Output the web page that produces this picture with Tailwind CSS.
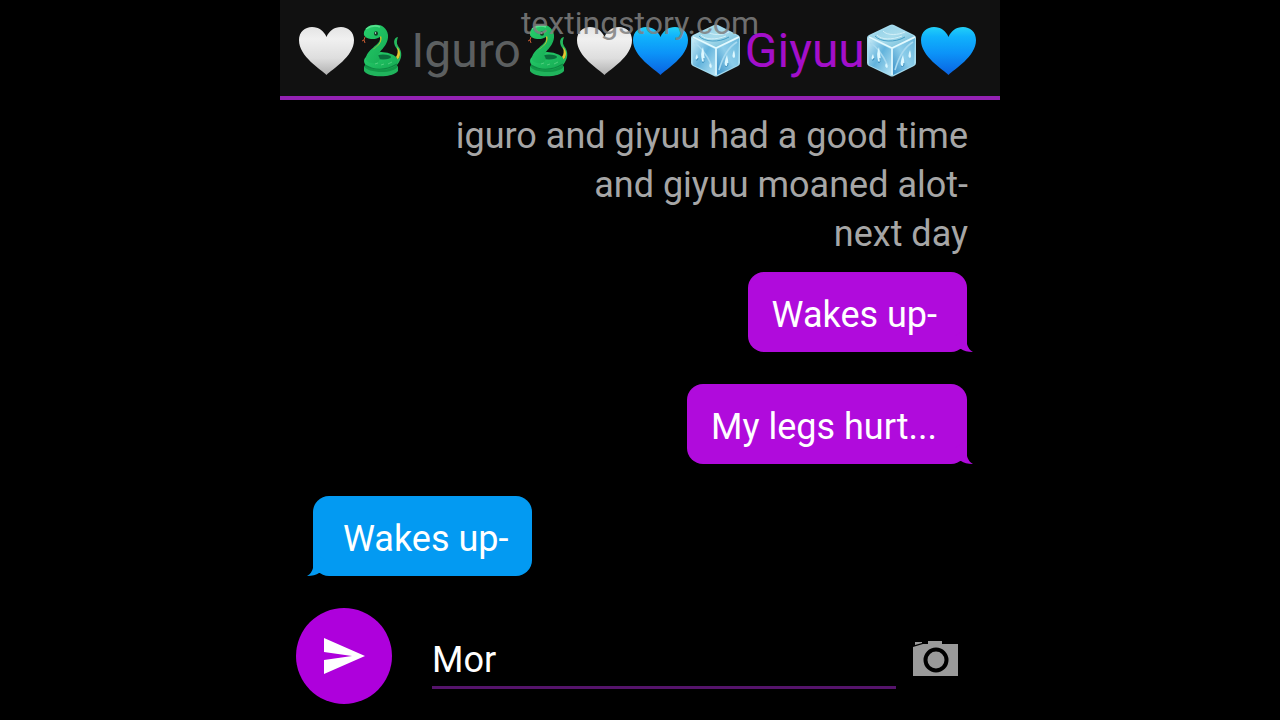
<!DOCTYPE html>
<html lang="en">
<head>
<meta charset="utf-8">
<meta name="viewport" content="width=device-width, initial-scale=1">
<title>Chat</title>
<script src="https://cdn.jsdelivr.net/npm/@tailwindcss/browser@4"></script>
</head>
<body class="bg-black font-[Roboto,sans-serif]">
<svg class="absolute size-0" aria-hidden="true">
  <defs>
    <linearGradient id="white" x1="0" y1="0" x2="0" y2="1"><stop offset="0" stop-color="#e4e4e4"/><stop offset=".25" stop-color="#f0f0f0"/><stop offset=".65" stop-color="#dedede"/><stop offset="1" stop-color="#b0b0b0"/></linearGradient>
    <linearGradient id="blue" x1="0" y1="0" x2="0" y2="1"><stop offset="0" stop-color="#22d0f8"/><stop offset=".2" stop-color="#10b2fc"/><stop offset=".55" stop-color="#0c93f8"/><stop offset="1" stop-color="#0a62e0"/></linearGradient>
    <linearGradient id="iceTop" x1="0" y1="0" x2="1" y2="1"><stop offset="0" stop-color="#8fcfe6"/><stop offset=".5" stop-color="#a9dcec"/><stop offset="1" stop-color="#5fb2d4"/></linearGradient>
    <linearGradient id="iceLeft" x1="0" y1="0" x2="1" y2="1"><stop offset="0" stop-color="#cdeef8"/><stop offset=".5" stop-color="#62b3dc"/><stop offset="1" stop-color="#b5e3f4"/></linearGradient>
    <linearGradient id="iceRight" x1="1" y1="0" x2="0" y2="1"><stop offset="0" stop-color="#6ab8dc"/><stop offset=".5" stop-color="#8ccdea"/><stop offset="1" stop-color="#388fc6"/></linearGradient>
    <linearGradient id="green" x1="0" y1="0" x2="1" y2="1"><stop offset="0" stop-color="#27cf6c"/><stop offset="1" stop-color="#15a851"/></linearGradient>
  </defs>
  <symbol id="heart" viewBox="1 0 56 56">
    <path d="M28.500 52C23 46 1 34 1 17C1 9 7 4 14 4C21 4 26 8 28.500 14C31 8 36 4 43 4C50 4 56 9 56 17C56 34 34 46 28.500 52Z"/>
  </symbol>
  <symbol id="snake" viewBox="1 0 56 56">
    <path d="M11 14L10 17L8 18M10 17L11 20" fill="none" stroke="#c85b32" stroke-width="1"/>
    <path d="M37 38C46 39 48 31 43 26C39 21 39 15 44 14C43 17 42 20 44 23C49 29 48 36 43 42Z" fill="#25b95d"/>
    <path d="M43 24C47 28 47 34 43 37L42 34C44 31 44 28 43 24Z" fill="#e5c830"/>
    <ellipse cx="27" cy="45" rx="17" ry="8" fill="#119747"/>
    <path d="M10 43C12 50 40 52 44 43V48C39 55 14 55 10 48Z" fill="#20b45c"/>
    <ellipse cx="27" cy="38" rx="17" ry="9" fill="url(#green)"/>
    <path d="M11 42Q26 51 43 41" fill="none" stroke="#0d8742" stroke-width="1.2"/>
    <ellipse cx="29" cy="34" rx="8" ry="2.500" fill="#0a6e3c"/>
    <path d="M26 14C28 22 11 26 12 37C16 43 29 40 25 34C22 29 35 24 34 12C33 4 26 1 20 2C14 2 9 7 10 12C12 17 22 17 26 14Z" fill="url(#green)"/>
    <path d="M26 14C28 20 22 24 18 27C25 23 29 18 27 13Z" fill="#e5bd24"/>
    <path d="M12 6Q19 1 26 4" fill="none" stroke="#58e18f" stroke-width="1.5"/>
    <ellipse cx="22" cy="10.500" rx="2" ry="2.300" fill="#123d25"/>
    <circle cx="21.500" cy="10" r=".7" fill="#dff"/>
    <path d="M21 41l3-1m3 2l3-1m4 0l4-2" stroke="#4fce7d" stroke-width="1"/>
  </symbol>
  <symbol id="ice" viewBox="2 0 56 56">
    <path d="M27 2Q29 1 31 2L51 12Q53 13 53 15V40Q53 42 51 43L31 53Q29 54 27 53L6 43Q4 42 4 40V15Q4 13 6 12Z" fill="#a5dbee"/>
    <path d="M28 3L51 13L29 25L6 14Z" fill="url(#iceTop)"/>
    <path d="M5 15L28 26V52L6 42Z" fill="url(#iceLeft)"/>
    <path d="M52 15L30 26V52L51 42Z" fill="url(#iceRight)"/>
    <path d="M29 52V25L6 14M29 25L52 14" fill="none" stroke="#e4faff" stroke-width="1.500"/>
    <path d="M14 12C18 17 29 17 39 13M20 8C24 13 36 12 42 9" fill="none" stroke="#d3f0f8" stroke-width="1"/>
    <path d="M12 13C17 19 32 20 42 14" fill="none" stroke="#459fc7" stroke-width="1"/>
    <path d="M7 20Q16 24 25 43M50 19Q38 26 32 47" fill="none" stroke="#a9daf0" stroke-width="1.500"/>
    <path d="M16 24Q13 30 15 38Q17 41 18 37ZM10 31Q7 36 10 37Q12 37 10 31ZM23 40Q21 44 24 45Q26 44 23 40ZM40 32Q36 41 39 44Q43 43 40 32ZM47 27Q44 34 47 35Q49 34 47 27Z" fill="#ddf8ff"/>
    <path d="M17 35Q18 41 15 39M41 40Q41 45 38 43M9 37Q11 38 11 35" fill="none" stroke="#348cbc"/>
  </symbol>
  <symbol id="tail" viewBox="0 0 22 24">
    <path d="M16 0V16Q17 21 22 24Q14 24 10 21L4 21V8Z"/>
  </symbol>
</svg>

<div class="mx-auto flex min-h-screen max-w-[720px] flex-col">
  <header class="relative border-b-4 border-[#9422b4] bg-[#111111]">
    <h1 class="flex h-24 items-center justify-center pt-1.5 pr-1 text-[48px] leading-[56px] font-normal whitespace-nowrap">
      <svg class="size-14 shrink-0 fill-[url(#white)]" role="img" aria-label="White heart"><use href="#heart"/></svg>
      <svg class="size-14 shrink-0" role="img" aria-label="Snake"><use href="#snake"/></svg>
      <span class="text-[#5c5f60]">Iguro</span>
      <svg class="size-14 shrink-0" role="img" aria-label="Snake"><use href="#snake"/></svg>
      <svg class="size-14 shrink-0 fill-[url(#white)]" role="img" aria-label="White heart"><use href="#heart"/></svg>
      <svg class="size-14 shrink-0 fill-[url(#blue)]" role="img" aria-label="Blue heart"><use href="#heart"/></svg>
      <svg class="size-14 shrink-0" role="img" aria-label="Ice"><use href="#ice"/></svg>
      <span class="text-[#a30fca]">Giyuu</span>
      <svg class="size-14 shrink-0" role="img" aria-label="Ice"><use href="#ice"/></svg>
      <svg class="size-14 shrink-0 fill-[url(#blue)]" role="img" aria-label="Blue heart"><use href="#heart"/></svg>
    </h1>
    <p class="absolute inset-x-0 top-[3px] text-center text-[32px] leading-10 text-[#808080]/85">textingstory.com</p>
  </header>

  <main class="flex flex-1 flex-col pt-3 pr-8 pl-8 text-[36px] leading-[49px] text-white">
    <p class="self-end text-right text-[#a6a6a6]">iguro and giyuu had a good time<br>and giyuu moaned alot-<br>next day</p>
    <div class="mt-[13px] flex flex-col gap-8">
      <p class="relative mr-px self-end rounded-2xl bg-[#b00bdc] pt-[19px] pr-[30px] pb-3 pl-6">Wakes up-<svg class="absolute -right-1.5 bottom-0 h-6 w-[22px] fill-[#b00bdc]" aria-hidden="true"><use href="#tail"/></svg></p>
      <p class="relative mr-px self-end rounded-2xl bg-[#b00bdc] pt-[19px] pr-[30px] pb-3 pl-6">My legs hurt...<svg class="absolute -right-1.5 bottom-0 h-6 w-[22px] fill-[#b00bdc]" aria-hidden="true"><use href="#tail"/></svg></p>
      <p class="relative ml-px self-start rounded-2xl bg-[#039af2] pt-[19px] pr-6 pb-3 pl-[30px]">Wakes up-<svg class="absolute bottom-0 -left-1.5 h-6 w-[22px] -scale-x-100 fill-[#039af2]" aria-hidden="true"><use href="#tail"/></svg></p>
    </div>
  </main>

  <form class="flex items-center p-4 pr-10">
    <button type="button" aria-label="Send" class="flex size-24 shrink-0 items-center justify-center rounded-full bg-[#ae00dc]">
      <svg class="h-9 w-[42px]" viewBox="0 0 42 36" aria-hidden="true"><path fill="#fff" d="M1 0L42 18L1 36V22L29 18L1 14Z"/></svg>
    </button>
    <input type="text" aria-label="Message" value="Mor" class="ml-10 h-[66px] min-w-0 flex-1 border-b-3 border-[#55146b] bg-transparent pt-2.5 text-[36px] text-white outline-none">
    <button type="button" aria-label="Camera" class="mr-px ml-4 shrink-0 pt-1">
      <svg class="h-9 w-[47px]" viewBox="0 0 47 36" aria-hidden="true"><path fill="#9a9a9a" d="M1 7L11 4H16V1H30V4H46V36H1ZM3 2H10V3L3 5Z"/><circle cx="24" cy="20" r="10.500" fill="#9a9a9a" stroke="#000" stroke-width="4"/></svg>
    </button>
  </form>
</div>
</body>
</html>
